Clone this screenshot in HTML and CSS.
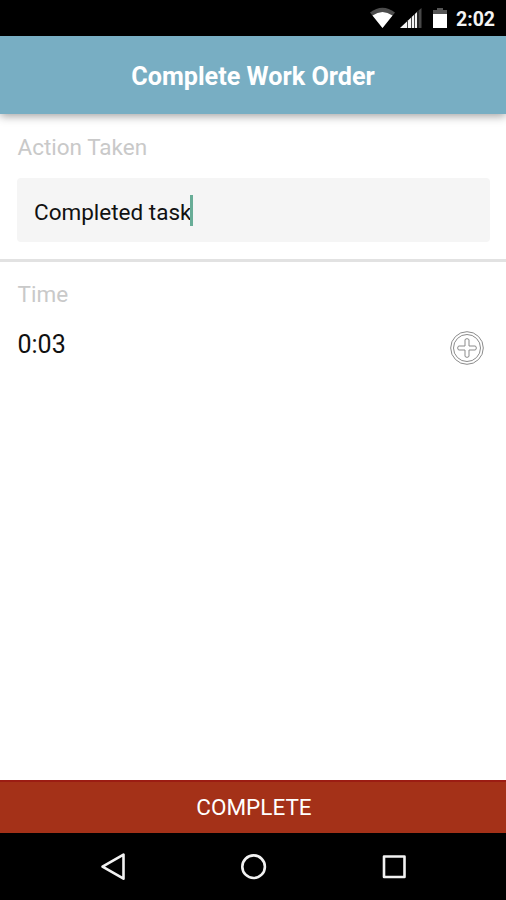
FILE: index.html
```html
<!DOCTYPE html>
<html lang="en">
<head>
<meta charset="utf-8">
<title>Complete Work Order</title>
<link rel="stylesheet" href="styles.css">
</head>
<body>
<div class="statusbar">
  <svg class="status-icons" width="80" height="36" viewBox="370 0 80 36">
    <path d="M370 12.5Q382.500 3 395 12.500L382.500 28Z" fill="#4c4c4c"/>
    <path d="M372.500 15.500Q382.500 8.500 392.500 15.500L382.500 28Z" fill="#fff"/>
    <path d="M400 28L417 12V28Z" fill="#f4f4f4"/>
    <path d="M418.500 10.500L421.500 8V28H418.500Z" fill="#484848"/>
    <path d="M407.500 20V28M411.500 17V28M414.500 14V28M417.700 11V28" stroke="#333" stroke-width=".9"/>
    <path d="M437 8H443V10H447V15H433V10H437Z" fill="#555"/>
    <path d="M433 14H447V28H433Z" fill="#fff"/>
  </svg>
  <span class="clock">2:02</span>
</div>
<header class="header"><h1 class="title">Complete Work Order</h1></header>
<main class="content">
  <section class="action">
    <div class="label">Action Taken</div>
    <div class="field"><span class="value">Completed task</span><span class="caret"></span></div>
  </section>
  <section class="time">
    <div>
      <div class="label">Time</div>
      <div class="duration">0:03</div>
    </div>
    <svg class="add" width="36" height="36" viewBox="0 0 36 36" fill="none" stroke="#8b8b8b">
      <circle cx="18" cy="18" r="16.300"/>
      <circle cx="18" cy="18" r="13.500"/>
      <path d="M16 10Q16 8.700 18 8.700T20 10V16H26Q27.300 16 27.300 18T26 20H20V26Q20 27.300 18 27.300T16 26V20H10Q8.700 20 8.700 18T10 16H16Z"/>
    </svg>
  </section>
</main>
<div class="complete"><span>COMPLETE</span></div>
<nav class="navbar">
  <svg width="506" height="67" viewBox="0 833 506 67" fill="none" stroke="#f2f2f2" stroke-width="2.600" stroke-linejoin="round">
    <path d="M102.500 866.700L123.500 854.700V878.700Z"/>
    <circle cx="253.600" cy="866.700" r="11.300"/>
    <rect x="384" y="856.500" width="20.500" height="20.500"/>
  </svg>
</nav>
</body>
</html>
```
FILE: styles.css
```css
* { box-sizing: border-box; }
body {
  margin: 0;
  width: 506px;
  height: 900px;
  display: flex;
  flex-direction: column;
  overflow: hidden;
  background: #fff;
  font-family: Roboto, "Liberation Sans", sans-serif;
}
.statusbar {
  height: 36px;
  flex: none;
  display: flex;
  justify-content: flex-end;
  padding-right: 10px;
  background: #000;
  color: #f4f4f4;
}
.status-icons { margin-right: 6px; }
.clock {
  width: 40px;
  font-size: 19.5px;
  font-weight: 700;
  line-height: 40px;
  white-space: nowrap;
}
.header {
  height: 78px;
  flex: none;
  background: #78aec3;
  box-shadow: 0 2px 9px rgba(0, 0, 0, .38);
  text-align: center;
}
.title {
  margin: 0;
  color: #fff;
  font-size: 25.2px;
  line-height: 82px;
  font-weight: 700;
}
.content { flex: 1; }
.action {
  height: 148px;
  padding: 19px 16px 0 17px;
  border-bottom: 3px solid #e2e2e2;
}
.label {
  padding-left: .5px;
  font-size: 22.5px;
  line-height: 28px;
  color: #c9c9c9;
}
.field {
  height: 64px;
  margin-top: 17px;
  padding-left: 17px;
  display: flex;
  align-items: center;
  border-radius: 4px;
  background: #f5f5f5;
}
.value { padding-top: 3px; font-size: 22.5px; line-height: 30px; color: #111; }
.caret { width: 3px; height: 31px; margin-left: -1px; background: #68ad97; }
.time {
  display: flex;
  justify-content: space-between;
  align-items: flex-start;
  padding: 18px 21px 0 17px;
}
.duration {
  margin-top: 20px;
  padding-left: .5px;
  font-size: 25px;
  line-height: 34px;
  color: #111;
}
.add { margin-top: 50px; }
.complete {
  height: 53px;
  flex: none;
  padding-left: 2px;
  border-top: 2px solid #9c1c13;
  background: #a43118;
  color: #fff;
  text-align: center;
  font-size: 22.5px;
  line-height: 51px;
}
.navbar { height: 67px; flex: none; background: #000; }
```
